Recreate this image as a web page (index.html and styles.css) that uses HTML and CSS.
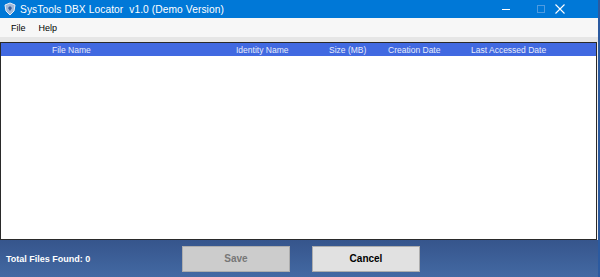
FILE: index.html
```html
<!DOCTYPE html>
<html lang="en">
<head>
    <meta charset="UTF-8">
    <title>SysTools DBX Locator</title>
    <link rel="stylesheet" href="styles.css">
</head>
<body>
    <div class="window">
        <div class="titlebar">
            <svg class="app-icon" width="14" height="14" viewBox="0 0 14 14">
                <path d="M2 3 L7 1 L12 3 L11 9 L7 13 L3 9 Z" fill="#9fb8d8" stroke="#e8eef7" stroke-width="1"/>
                <path d="M5 6 L7 4 L9 6 L7 9 Z" fill="#3b5f9a"/>
            </svg>
            <span class="title">SysTools DBX Locator&nbsp; v1.0 (Demo Version)</span>
            <div class="controls">
                <span class="ctl min"></span>
                <span class="ctl max"></span>
                <svg class="ctl close" width="10" height="10" viewBox="0 0 10 10">
                    <path d="M0.5 0.5 L9.5 9.5 M9.5 0.5 L0.5 9.5" stroke="#fff" stroke-width="1.1"/>
                </svg>
            </div>
        </div>

        <div class="menubar">
            <span class="menu-item">File</span>
            <span class="menu-item">Help</span>
        </div>

        <div class="list">
            <div class="list-header">
                <span class="col col-name">File Name</span>
                <span class="col col-identity">Identity Name</span>
                <span class="col col-size">Size (MB)</span>
                <span class="col col-created">Creation Date</span>
                <span class="col col-accessed">Last Accessed Date</span>
            </div>
            <div class="list-body"></div>
        </div>

        <div class="footer">
            <span class="total">Total Files Found: 0</span>
            <button class="btn btn-save" disabled>Save</button>
            <button class="btn btn-cancel">Cancel</button>
        </div>
    </div>
</body>
</html>
```

FILE: styles.css
```css
* {
    margin: 0;
    padding: 0;
    box-sizing: border-box;
}

body {
    font-family: 'Liberation Sans', 'DejaVu Sans', sans-serif;
    width: 600px;
    height: 277px;
    overflow: hidden;
}

.window {
    width: 600px;
    height: 277px;
    display: flex;
    flex-direction: column;
    border-right: 2px solid #2b5aa0;
    background-color: #f0f0f0;
}

.titlebar {
    height: 18px;
    background-color: #0078d7;
    color: #fff;
    display: flex;
    align-items: center;
    padding-left: 3px;
}

.app-icon {
    margin-right: 3px;
}

.title {
    font-family: 'Liberation Sans', sans-serif;
    font-size: 10.2px;
    letter-spacing: 0.1px;
}

.controls {
    margin-left: auto;
    display: flex;
    align-items: center;
    height: 100%;
}

.ctl {
    display: block;
}

.min {
    width: 8px;
    height: 1px;
    background-color: #fff;
    margin-right: 27px;
}

.max {
    width: 8px;
    height: 8px;
    border: 1px solid #4f9be0;
    margin-right: 10px;
}

.close {
    margin-right: 33px;
}

.menubar {
    height: 24px;
    background-color: #f7f7f7;
    display: flex;
    align-items: center;
    padding-left: 11px;
    gap: 13px;
    font-size: 9px;
    color: #000;
    border-bottom: 5px solid #e6e6e6;
}

.list {
    flex: 1;
    display: flex;
    flex-direction: column;
    border: 1px solid #2a2a2a;
    margin-right: 1px;
    background-color: #fff;
}

.list-header {
    height: 13px;
    background-color: #4169e1;
    color: #e8ecfa;
    font-size: 8.5px;
    position: relative;
    display: flex;
    align-items: center;
}

.col {
    position: absolute;
    white-space: nowrap;
}

.col-name { left: 51px; }
.col-identity { left: 235px; }
.col-size { left: 328px; }
.col-created { left: 387px; }
.col-accessed { left: 470px; }

.list-body {
    flex: 1;
    background-color: #fff;
}

.footer {
    height: 37px;
    background: linear-gradient(to bottom, #36558c, #4369a3);
    display: flex;
    align-items: center;
    padding-left: 6px;
}

.total {
    color: #fff;
    font-weight: bold;
    font-size: 9px;
    width: 176px;
}

.btn {
    width: 108px;
    height: 26px;
    font-family: 'Liberation Sans', sans-serif;
    font-weight: bold;
    font-size: 10px;
    border: 1px solid #adadad;
}

.btn-save {
    background-color: #cccccc;
    color: #777;
    margin-right: 22px;
}

.btn-cancel {
    background-color: #e1e1e1;
    color: #000;
}
```
